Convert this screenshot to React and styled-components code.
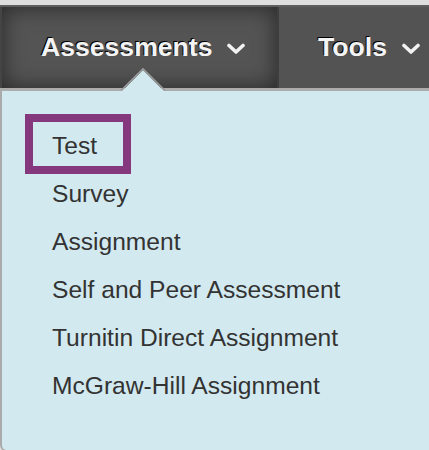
import React from "react";
import styled, { createGlobalStyle } from "styled-components";

const Global = createGlobalStyle`
  html, body { margin: 0; padding: 0; }
  body {
    background: #dedede;
    font-family: "Liberation Sans", Arial, sans-serif;
    width: 429px;
    height: 450px;
    overflow: hidden;
  }
`;

const Page = styled.div`
  padding-top: 5px;
  display: flex;
  flex-direction: column;
`;

const NavBar = styled.nav`
  display: flex;
  height: 81px;
  background: #535353;
  border-top: 2px solid #5e5e5e;
  border-bottom: 3px solid #acacac;
  padding-left: 2px;
  box-shadow: inset 2px 0 0 #444;
`;

const Tab = styled.div`
  display: flex;
  align-items: center;
  box-sizing: border-box;
  width: ${(p) => p.$width}px;
  padding-left: 39px;
  gap: ${(p) => p.$gap}px;
  background: ${(p) => (p.$active ? "#545454" : "#535353")};
  box-shadow: ${(p) =>
    p.$active ? "inset 0 0 22px rgba(0,0,0,0.55)" : "none"};
  border-right: ${(p) => (p.$active ? "2px solid #3e3e3e" : "none")};
`;

const TabLabel = styled.span`
  color: #f4f4f4;
  font-family: "Liberation Sans", Arial, sans-serif;
  font-weight: bold;
  font-size: 26.6px;
  text-shadow: -1px -1px 0 #000;
`;

const Chevron = styled.svg`
  width: 20px;
  height: 12px;
  margin-top: 2px;
  filter: blur(0.3px);
`;

const Panel = styled.div`
  position: relative;
  box-sizing: border-box;
  height: 360px;
  background: #d2e9ef;
  border-left: 2px solid #aaaaaa;
  border-bottom: 1px solid #aaaaaa;
  border-bottom-left-radius: 6px;
  padding: 31px 0 0 49px;
`;

const Notch = styled.svg`
  position: absolute;
  left: 117px;
  top: -23px;
  width: 48px;
  height: 24px;
`;

const Menu = styled.ul`
  list-style: none;
  margin: 0;
  padding: 0 0 0 1px;
  display: flex;
  flex-direction: column;
`;

const Item = styled.li`
  height: 48px;
  line-height: 48px;
  font-size: 24.6px;
  color: #333333;
  font-family: "Liberation Sans", Arial, sans-serif;
`;

const Highlight = styled.span`
  display: inline-block;
  line-height: 40px;
  padding: 4px 26px 0 19px;
  margin-left: -19px;
  outline: 8px solid #86387f;
`;

const ChevronIcon = () => (
  <Chevron viewBox="0 0 20 12">
    <polyline
      points="3,2.5 10,9 17,2.5"
      fill="none"
      stroke="#f2f2f2"
      strokeWidth="3.6"
      strokeLinecap="round"
      strokeLinejoin="round"
    />
  </Chevron>
);

const items = [
  "Test",
  "Survey",
  "Assignment",
  "Self and Peer Assessment",
  "Turnitin Direct Assignment",
  "McGraw-Hill Assignment",
];

export default function App() {
  return (
    <>
      <Global />
      <Page>
        <NavBar>
          <Tab $active $width={277} $gap={14}>
            <TabLabel>Assessments</TabLabel>
            <ChevronIcon />
          </Tab>
          <Tab $width={150} $gap={14}>
            <TabLabel>Tools</TabLabel>
            <ChevronIcon />
          </Tab>
        </NavBar>
        <Panel>
          <Notch viewBox="0 0 48 24">
            <polygon points="2,24 24,2 46,24" fill="#d2e9ef" />
            <polyline
              points="2,22.5 24,0.8 46,22.5"
              fill="none"
              stroke="#9a9a9a"
              strokeWidth="1.6"
            />
          </Notch>
          <Menu>
            {items.map((t, i) => (
              <Item key={t}>
                {i === 0 ? <Highlight>{t}</Highlight> : t}
              </Item>
            ))}
          </Menu>
        </Panel>
      </Page>
    </>
  );
}
